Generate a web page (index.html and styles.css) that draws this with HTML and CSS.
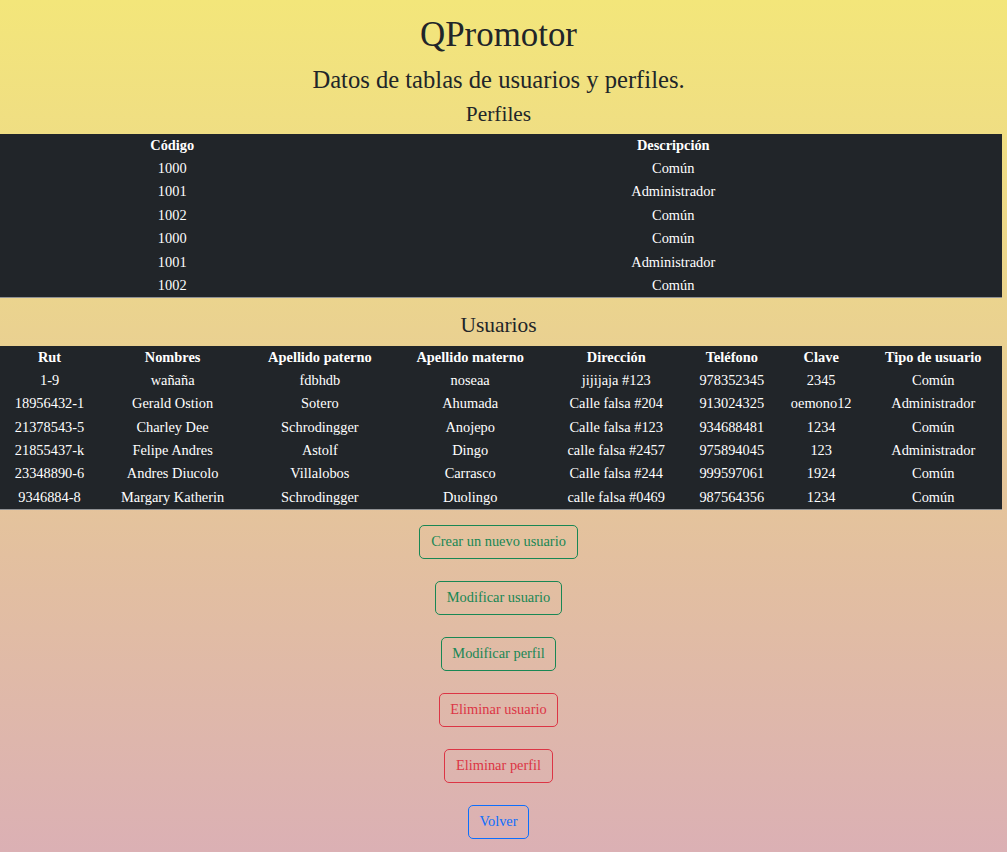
FILE: index.html
```html
<!DOCTYPE html>
<html lang="es">
<head>
<meta charset="utf-8">
<title>QPromotor</title>
<link rel="stylesheet" href="styles.css">
</head>
<body>
<div class="page">
  <h1 class="title">QPromotor</h1>
  <h3 class="subtitle">Datos de tablas de usuarios y perfiles.</h3>
  <h4 class="section first">Perfiles</h4>
  <table class="data">
    <thead>
      <tr><th>Código</th><th>Descripción</th></tr>
    </thead>
    <tbody>
      <tr><td>1000</td><td>Común</td></tr>
      <tr><td>1001</td><td>Administrador</td></tr>
      <tr><td>1002</td><td>Común</td></tr>
      <tr><td>1000</td><td>Común</td></tr>
      <tr><td>1001</td><td>Administrador</td></tr>
      <tr><td>1002</td><td>Común</td></tr>
    </tbody>
  </table>
  <h4 class="section">Usuarios</h4>
  <table class="data">
    <thead>
      <tr><th>Rut</th><th>Nombres</th><th>Apellido paterno</th><th>Apellido materno</th><th>Dirección</th><th>Teléfono</th><th>Clave</th><th>Tipo de usuario</th></tr>
    </thead>
    <tbody>
      <tr><td>1-9</td><td>wañaña</td><td>fdbhdb</td><td>noseaa</td><td>jijijaja #123</td><td>978352345</td><td>2345</td><td>Común</td></tr>
      <tr><td>18956432-1</td><td>Gerald Ostion</td><td>Sotero</td><td>Ahumada</td><td>Calle falsa #204</td><td>913024325</td><td>oemono12</td><td>Administrador</td></tr>
      <tr><td>21378543-5</td><td>Charley Dee</td><td>Schrodingger</td><td>Anojepo</td><td>Calle falsa #123</td><td>934688481</td><td>1234</td><td>Común</td></tr>
      <tr><td>21855437-k</td><td>Felipe Andres</td><td>Astolf</td><td>Dingo</td><td>calle falsa #2457</td><td>975894045</td><td>123</td><td>Administrador</td></tr>
      <tr><td>23348890-6</td><td>Andres Diucolo</td><td>Villalobos</td><td>Carrasco</td><td>Calle falsa #244</td><td>999597061</td><td>1924</td><td>Común</td></tr>
      <tr><td>9346884-8</td><td>Margary Katherin</td><td>Schrodingger</td><td>Duolingo</td><td>calle falsa #0469</td><td>987564356</td><td>1234</td><td>Común</td></tr>
    </tbody>
  </table>
  <div class="actions">
    <button class="btn btn-success">Crear un nuevo usuario</button>
    <button class="btn btn-success">Modificar usuario</button>
    <button class="btn btn-success">Modificar perfil</button>
    <button class="btn btn-danger">Eliminar usuario</button>
    <button class="btn btn-danger">Eliminar perfil</button>
    <button class="btn btn-primary">Volver</button>
  </div>
</div>
</body>
</html>
```
FILE: styles.css
```css
html, body {
  margin: 0;
  padding: 0;
}
body {
  font-family: "Liberation Serif", "Times New Roman", serif;
  font-size: 14.4px;
  line-height: 1.5;
  color: #212529;
  background: linear-gradient(to bottom, #f3e67a 0%, #ebd48e 35%, #e3c09f 65%, #dbb0b4 100%);
  min-height: 852px;
}
.page {
  width: 997px;
  padding-top: 14px;
  min-height: 838px;
}
.title, .subtitle, .section {
  text-align: center;
  font-weight: 400;
  line-height: 1.2;
  margin: 0 0 7.2px 0;
}
.title {
  font-size: 34.9px;
  margin-bottom: 9px;
}
.subtitle {
  font-size: 24.6px;
}
.section {
  font-size: 21.4px;
}
.section.first {
  margin-top: 1px;
  margin-bottom: 6.5px;
}
.data {
  width: 1002px;
  border-collapse: collapse;
  border-spacing: 0;
  background: #212529;
  color: #ffffff;
  margin-bottom: 14.4px;
  border-bottom: 1px solid #8f9193;
}
.data th, .data td {
  text-align: center;
  padding: 0.9px 0;
  line-height: 21.6px;
  font-size: 14.4px;
}
.data th {
  font-weight: 700;
}
.actions {
  display: flex;
  flex-direction: column;
  align-items: center;
  gap: 21.6px;
}
.btn {
  font-family: "Liberation Serif", "Times New Roman", serif;
  font-size: 14.4px;
  line-height: 1.5;
  padding: 5.4px 10.8px;
  background: transparent;
  border: 1px solid;
  border-radius: 5px;
  cursor: pointer;
}
.btn-success {
  color: #198754;
  border-color: #198754;
}
.btn-danger {
  color: #dc3545;
  border-color: #dc3545;
}
.btn-primary {
  color: #0d6efd;
  border-color: #0d6efd;
}
```
